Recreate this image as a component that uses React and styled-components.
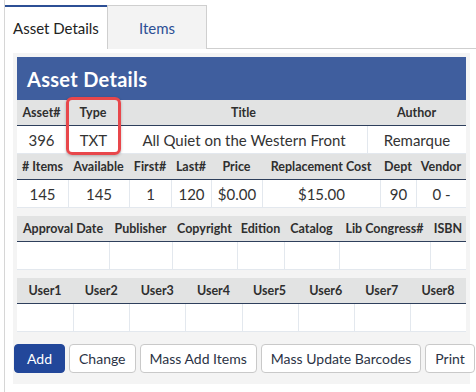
import styled, { createGlobalStyle } from "styled-components";

const GlobalStyle = createGlobalStyle`
  body {
    margin: 0;
    background: #fff;
    font-family: Lato, "Open Sans", sans-serif;
    color: #333;
  }
`;

const assetTable = [
  {
    cols: "49px 54px 247px 1fr",
    heads: ["Asset#", "Type", "Title", "Author"],
    values: ["396", "TXT", "All Quiet on the Western Front", "Remarque"],
  },
  {
    cols: "51px 61px 42px 40px 51px 118px 36px 1fr",
    heads: ["# Items", "Available", "First#", "Last#", "Price", "Replacement Cost", "Dept", "Vendor"],
    values: ["145", "145", "1", "120", "$0.00", "$15.00", "90", "0 -"],
  },
];

const publishing = {
  cols: "92px 63px 65px 47px 55px 91px 1fr",
  heads: ["Approval Date", "Publisher", "Copyright", "Edition", "Catalog", "Lib Congress#", "ISBN"],
  values: ["", "", "", "", "", "", ""],
};

const userFields = {
  cols: "repeat(8, 1fr)",
  heads: ["User1", "User2", "User3", "User4", "User5", "User6", "User7", "User8"],
  values: ["", "", "", "", "", "", "", ""],
};

function Grid({ group }) {
  return (
    <>
      <HeadRow $cols={group.cols}>
        {group.heads.map((h) => (
          <HeadCell key={h}>{h}</HeadCell>
        ))}
      </HeadRow>
      <DataRow $cols={group.cols}>
        {group.values.map((v, i) => (
          <DataCell key={i}>{v}</DataCell>
        ))}
      </DataRow>
    </>
  );
}

export default function App() {
  return (
    <Page>
      <GlobalStyle />
      <TabBar>
        <Tab $active>Asset Details</Tab>
        <Tab>Items</Tab>
      </TabBar>

      <Panel>
        <Card>
          <CardTitle>Asset Details</CardTitle>
          {assetTable.map((g, i) => (
            <Grid key={i} group={g} />
          ))}
          <Highlight />
        </Card>

        <Card>
          <Grid group={publishing} />
        </Card>

        <Card>
          <Grid group={userFields} />
        </Card>

        <Actions>
          <Button $primary>Add</Button>
          <Button>Change</Button>
          <Button>Mass Add Items</Button>
          <Button>Mass Update Barcodes</Button>
          <Button>Print</Button>
        </Actions>
      </Panel>
    </Page>
  );
}

const Page = styled.div`
  margin-left: 4px;
  border-left: 1px solid #d6d6d6;
  min-height: 392px;
`;

const TabBar = styled.div`
  display: flex;
  padding-top: 5px;
  border-bottom: 1px solid #cfcfcf;
`;

const Tab = styled.div`
  height: 44px;
  box-sizing: border-box;
  display: flex;
  align-items: center;
  font-size: 15px;
  margin-bottom: -1px;
  ${(p) =>
    p.$active
      ? `
    width: 102px;
    padding-left: 8px;
    background: #fff;
    border-top: 2px solid #2c4f95;
    color: #222;
  `
      : `
    width: 100px;
    justify-content: center;
    background: #f3f3f3;
    border: 1px solid #cfcfcf;
    border-bottom: none;
    color: #2c4f95;
  `}
`;

const Panel = styled.div`
  margin: 4px 6px 0 8px;
  padding: 4px 4px 11px;
  background: #f4f4f4;
  display: flex;
  flex-direction: column;
`;

const Card = styled.div`
  position: relative;
  background: #fff;
  margin-bottom: 8px;
`;

const CardTitle = styled.div`
  height: 43px;
  background: #3f5e9e;
  color: #fff;
  font-size: 20px;
  font-weight: 700;
  display: flex;
  align-items: center;
  padding-left: 10px;
  letter-spacing: 0.3px;
`;

const HeadRow = styled.div`
  display: grid;
  grid-template-columns: ${(p) => p.$cols};
  height: 25px;
  background: #e2e3e3;
  border-bottom: 1px solid #2e3f5c;
`;

const HeadCell = styled.div`
  display: flex;
  align-items: center;
  justify-content: center;
  font-size: 12.5px;
  font-weight: 700;
  color: #2f2f2f;
  white-space: nowrap;
`;

const DataRow = styled.div`
  display: grid;
  grid-template-columns: ${(p) => p.$cols};
  height: 27px;
  border-bottom: 1px solid #e3e8ee;
`;

const DataCell = styled.div`
  display: flex;
  align-items: center;
  justify-content: center;
  font-size: 15px;
  color: #333;
  white-space: nowrap;
  border-left: 1px solid #e3e8ee;
  &:first-child {
    border-left: none;
  }
`;

const Highlight = styled.div`
  position: absolute;
  left: 49px;
  top: 40px;
  width: 55px;
  height: 58px;
  box-sizing: border-box;
  border: 3px solid #e8474b;
  border-radius: 6px;
  box-shadow: 0 1px 3px rgba(0, 0, 0, 0.25);
`;

const Actions = styled.div`
  display: flex;
  gap: 4px;
  margin-top: 4px;
  margin-left: -3px;
`;

const Button = styled.button`
  height: 29px;
  padding: 0 9px;
  border-radius: 4px;
  font-family: Lato, "Open Sans", sans-serif;
  font-size: 14px;
  border: 1px solid ${(p) => (p.$primary ? "#22479a" : "#c9c9c9")};
  background: ${(p) => (p.$primary ? "#22479a" : "#fff")};
  color: ${(p) => (p.$primary ? "#fff" : "#2b3345")};
  white-space: nowrap;
  ${(p) => p.$primary && "padding: 0 12px;"}
`;
